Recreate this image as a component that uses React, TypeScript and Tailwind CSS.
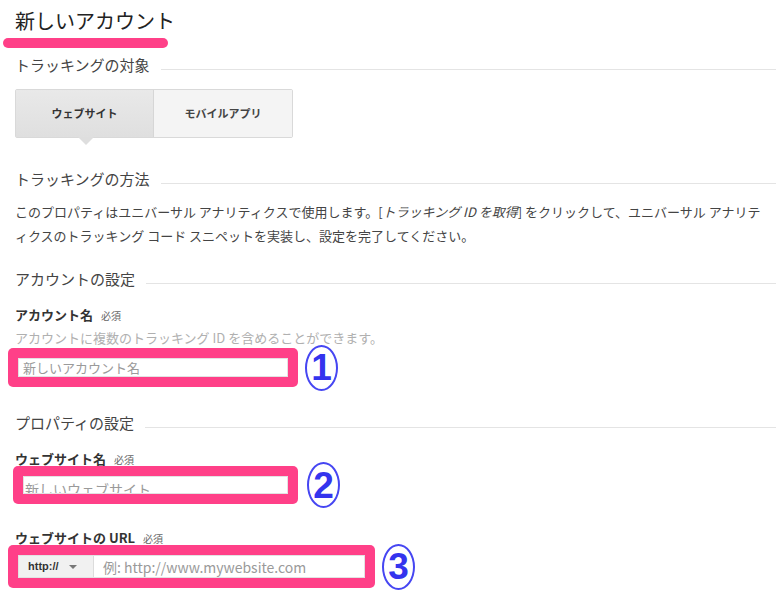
import React from "react";

function SectionHeader({ title, className = "" }: { title: string; className?: string }) {
  return (
    <div className={`flex items-center gap-[11px] h-[20px] pr-[4px] ${className}`}>
      <span className="text-[15px] leading-[20px] text-[#444] whitespace-nowrap">{title}</span>
      <div className="flex-1 h-px bg-[#e4e4e4] mt-2" />
    </div>
  );
}

function Circle({ n }: { n: string }) {
  return (
    <div className="w-[33px] h-[46px] my-[-6px] shrink-0 rounded-[50%] border-2 border-[#4646f2] flex items-center justify-center text-[#3434ee] font-bold text-[37px] leading-none font-['Liberation_Sans',sans-serif]">
      {n}
    </div>
  );
}

function Label({ text, className = "" }: { text: string; className?: string }) {
  return (
    <div className={`h-[18px] leading-[18px] whitespace-nowrap overflow-visible ${className}`}>
      <span className="text-[13px] font-bold text-[#333]">{text}</span>
      <span className="ml-[8px] text-[10px] text-[#666]">必須</span>
    </div>
  );
}

export default function App() {
  return (
    <div className="w-[780px] h-[590px] overflow-hidden bg-white pl-[15px] font-['Noto_Sans_CJK_JP','Liberation_Sans',sans-serif] text-[#333]">
      <div className="pt-[7px] text-[20px] leading-[28px] text-[#222]">新しいアカウント</div>
      <div className="ml-[-12px] mt-[3px] w-[165px] h-[10px] rounded-full bg-[#ff4088]" />

      <SectionHeader title="トラッキングの対象" className="mt-[7px]" />

      <div className="relative mt-[14px] flex w-[278px] h-[49px] border border-[#d9d9d9] rounded-[2px]">
        <div className="w-[138px] flex items-center justify-center bg-gradient-to-b from-[#e9e9e9] to-[#dfdfdf] border-r border-[#d6d6d6] text-[11px] font-bold text-[#333]">
          ウェブサイト
        </div>
        <div className="flex-1 flex items-center justify-center bg-[#f4f4f4] text-[11px] font-bold text-[#444]">
          モバイルアプリ
        </div>
        <div className="absolute left-[62px] top-full w-0 h-0 border-l-[8px] border-r-[8px] border-t-[8px] border-l-transparent border-r-transparent border-t-[#dedede]" />
      </div>

      <SectionHeader title="トラッキングの方法" className="mt-[31px]" />

      <p className="mt-[11px] pr-[4px] text-[13px] leading-[24px] text-[#444]">
        このプロパティはユニバーサル アナリティクスで使用します。[<i>トラッキング ID を取得</i>] をクリックして、ユニバーサル アナリテ
        <br />
        ィクスのトラッキング コード スニペットを実装し、設定を完了してください。
      </p>

      <SectionHeader title="アカウントの設定" className="mt-[21px]" />

      <Label text="アカウント名" className="mt-[15px]" />
      <div className="mt-[6px] h-[20px] text-[13px] leading-[20px] text-[#b0b0b0]">
        アカウントに複数のトラッキング ID を含めることができます。
      </div>
      <div className="ml-[-7px] flex items-center gap-[7px]">
        <div className="w-[290px] h-[39px] rounded-[5px] bg-[#ff4088] pt-[10px] px-[10px]">
          <div className="h-[19px] bg-white border border-[#e2e2e2] pl-[4px] text-[13px] leading-[17px] text-[#9a9a9a]">
            新しいアカウント名
          </div>
        </div>
        <Circle n="1" />
      </div>

      <SectionHeader title="プロパティの設定" className="mt-[26px]" />

      <Label text="ウェブサイト名" className="mt-[15px]" />
      <div className="ml-[-2px] flex items-center gap-[9px]">
        <div className="w-[285px] h-[38px] rounded-[5px] bg-[#ff4088] pt-[10px] px-[10px]">
          <div className="h-[18px] overflow-hidden bg-white border border-[#e2e2e2] pl-[1px] pt-[2px] text-[14px] leading-[20px] text-[#9a9a9a]">
            新しいウェブサイト
          </div>
        </div>
        <Circle n="2" />
      </div>

      <Label text="ウェブサイトの URL" className="mt-[23px]" />
      <div className="ml-[-7px] flex items-center gap-[7px]">
        <div className="w-[367px] h-[43px] rounded-[5px] bg-[#ff4088] pt-[10px] px-[10px]">
          <div className="h-[23px] flex bg-white border border-[#e2e2e2]">
            <div className="w-[75px] flex items-center bg-[#f1f1f1] border-r border-[#dcdcdc] pl-[9px]">
              <span className="text-[11px] font-bold text-[#333] font-['Liberation_Sans',sans-serif]">http://</span>
              <span className="ml-[10px] w-0 h-0 border-l-[4px] border-r-[4px] border-t-[4px] border-l-transparent border-r-transparent border-t-[#777]" />
            </div>
            <div className="flex items-center pl-[9px] text-[14px] leading-[20px] text-[#9a9a9a]">
              例: http://www.mywebsite.com
            </div>
          </div>
        </div>
        <Circle n="3" />
      </div>
    </div>
  );
}
